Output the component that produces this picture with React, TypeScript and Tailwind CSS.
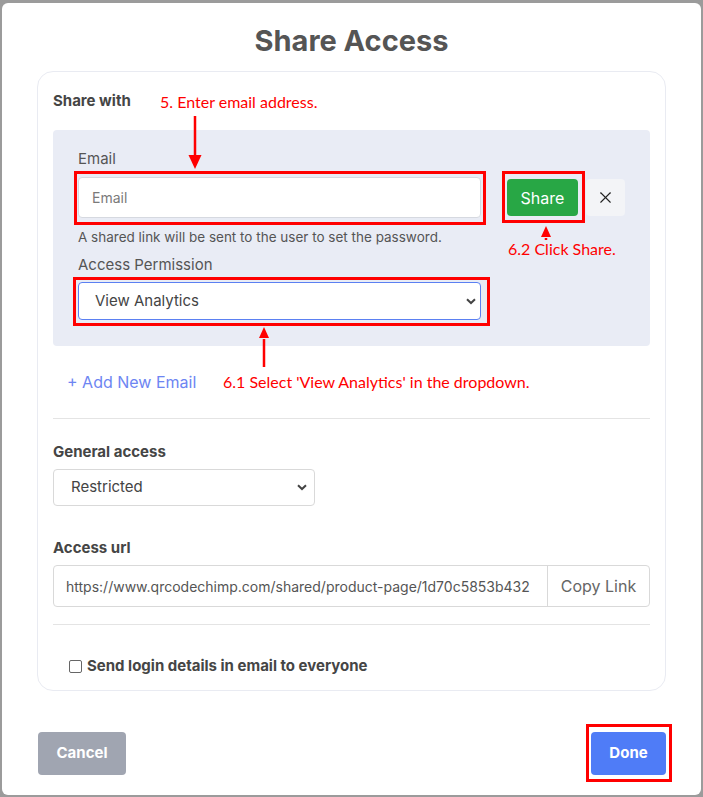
import { X } from 'lucide-react'

const ui = { fontFamily: 'Inter, "Noto Sans", sans-serif' }
const note = { fontFamily: 'Lato, "Noto Sans", sans-serif' }

function Chevron() {
  return (
    <svg width="10" height="7" viewBox="0 0 10 7" className="shrink-0">
      <path d="M1 1.2 L5 5 L9 1.2" fill="none" stroke="#444" strokeWidth="2" />
    </svg>
  )
}

// red arrow, drawn in page coordinates
function Arrow({ x, y1, y2 }: { x: number; y1: number; y2: number }) {
  const down = y2 > y1
  const top = Math.min(y1, y2)
  const h = Math.abs(y2 - y1)
  return (
    <svg
      className="absolute pointer-events-none"
      style={{ left: x - 7, top, width: 14, height: h }}
      viewBox={`0 0 14 ${h}`}
    >
      {down ? (
        <>
          <line x1="7" y1="0" x2="7" y2={h - 12} stroke="#ff0000" strokeWidth="2.5" />
          <polygon points={`0.5,${h - 14} 13.5,${h - 14} 7,${h}`} fill="#ff0000" />
        </>
      ) : (
        <>
          <line x1="7" y1="12" x2="7" y2={h} stroke="#ff0000" strokeWidth="2.5" />
          <polygon points="2,11 12,11 7,0" fill="#ff0000" />
        </>
      )}
    </svg>
  )
}

export default function App() {
  return (
    <div className="relative w-[703px] h-[797px] bg-[#9b9b9b] pt-[3px] pl-[2px] overflow-hidden" style={ui}>
      {/* Modal */}
      <div className="w-[699px] h-[792px] bg-white rounded-md px-[35px] pt-[21px]">
        <h2 className="text-[29px] leading-[34px] font-bold text-[#555] text-center">Share Access</h2>

        {/* Card */}
        <div className="mt-[13px] h-[620px] border border-[#e9ebf2] rounded-2xl px-[15px] pt-[19px]">
          <div className="text-[15px] leading-5 font-bold text-[#454545]">Share with</div>

          {/* Share panel */}
          <div className="mt-[19px] h-[216px] bg-[#e9ecf5] rounded pl-[25px] pr-[24px] pt-[19px]">
            <div className="text-[15px] leading-5 text-[#555]">Email</div>
            <div className="mt-2 flex items-center">
              <div className="relative">
                <input
                  placeholder="Email"
                  className="block w-[403px] h-[41px] bg-white border border-[#d6d9e0] rounded pl-[13px] text-[14px] text-[#555] placeholder:text-[#7a7a7a] outline-none"
                />
                <span className="absolute -left-[4px] -right-[5px] -top-[6px] -bottom-[7px] border-[3px] border-[#ff0000] pointer-events-none" />
              </div>
              <div className="relative ml-[26px]">
                <button className="w-[71px] h-[37px] bg-[#28a745] rounded text-white text-[16px]">Share</button>
                <span className="absolute -left-[5px] -right-[7px] -top-[8px] -bottom-[7px] border-[3px] border-[#ff0000] pointer-events-none" />
              </div>
              <button className="ml-2 w-[39px] h-[37px] bg-[#f3f4f7] rounded flex items-center justify-center">
                <X size={19} strokeWidth={1.4} color="#222" />
              </button>
            </div>
            <div className="mt-[11px] text-[13.5px] leading-4 text-[#555]">
              A shared link will be sent to the user to set the password.
            </div>
            <div className="mt-[10px] text-[15px] leading-5 text-[#555]">Access Permission</div>
            <div className="relative mt-[7px] w-[403px]">
              <div className="h-[38px] bg-white border border-[#5b80f2] rounded flex items-center justify-between pl-[16px] pr-[4px] text-[15px] text-[#444]">
                <span>View Analytics</span>
                <Chevron />
              </div>
              <span className="absolute -left-[5px] -right-[9px] -top-[5px] -bottom-[6px] border-[3px] border-[#ff0000] pointer-events-none" />
            </div>
          </div>

          <div className="mt-[25px] pl-[14px] text-[16px] leading-[22px] text-[#6d85f2]">+ Add New Email</div>
          <div className="mt-[25px] border-t border-[#e4e4e4]" />

          <div className="mt-[23px] text-[15px] leading-5 font-bold text-[#454545]">General access</div>
          <div className="mt-[7px] w-[262px] h-[37px] border border-[#d9d9d9] rounded flex items-center justify-between pl-[17px] pr-[7px] text-[15px] text-[#444]">
            <span>Restricted</span>
            <Chevron />
          </div>

          <div className="mt-[32px] text-[15px] leading-5 font-bold text-[#454545]">Access url</div>
          <div className="mt-[7px] h-[42px] border border-[#d9d9d9] rounded flex">
            <div className="flex-1 flex items-center pl-[12px] text-[14px] text-[#555] overflow-hidden whitespace-nowrap">
              https://www.qrcodechimp.com/shared/product-page/1d70c5853b432
            </div>
            <div className="w-[102px] border-l border-[#d9d9d9] flex items-center justify-center text-[16px] text-[#666]">
              Copy Link
            </div>
          </div>
          <div className="mt-[17px] border-t border-[#e4e4e4]" />

          <label className="mt-[31px] ml-[16px] flex items-center gap-[5px] text-[15px] leading-5 font-bold text-[#454545]">
            <span className="w-[13px] h-[13px] border border-[#666] rounded-[2px] bg-white" />
            Send login details in email to everyone
          </label>
        </div>

        {/* Footer */}
        <div className="mt-[41px] flex justify-between pl-px">
          <button className="w-[88px] h-[43px] bg-[#a0a5b1] rounded text-white text-[15px] font-bold">Cancel</button>
          <div className="relative">
            <button className="w-[75px] h-[43px] bg-[#4f7cf7] rounded text-white text-[15px] font-bold">Done</button>
            <span className="absolute -left-[5px] -right-[6px] -top-[8px] -bottom-[7px] border-[3px] border-[#ff0000] pointer-events-none" />
          </div>
        </div>
      </div>

      {/* Annotations */}
      <div className="absolute left-[160px] top-[92px] text-[16px] leading-5 text-[#ff0000]" style={note}>
        5. Enter email address.
      </div>
      <Arrow x={195} y1={116} y2={169} />
      <Arrow x={546} y1={240} y2={226} />
      <div className="absolute left-[508px] top-[239px] text-[16px] leading-5 text-[#ff0000]" style={note}>
        6.2 Click Share.
      </div>
      <Arrow x={264} y1={367} y2={327} />
      <div className="absolute left-[223px] top-[372px] text-[16px] leading-5 text-[#ff0000]" style={note}>
        6.1 Select 'View Analytics' in the dropdown.
      </div>
    </div>
  )
}
